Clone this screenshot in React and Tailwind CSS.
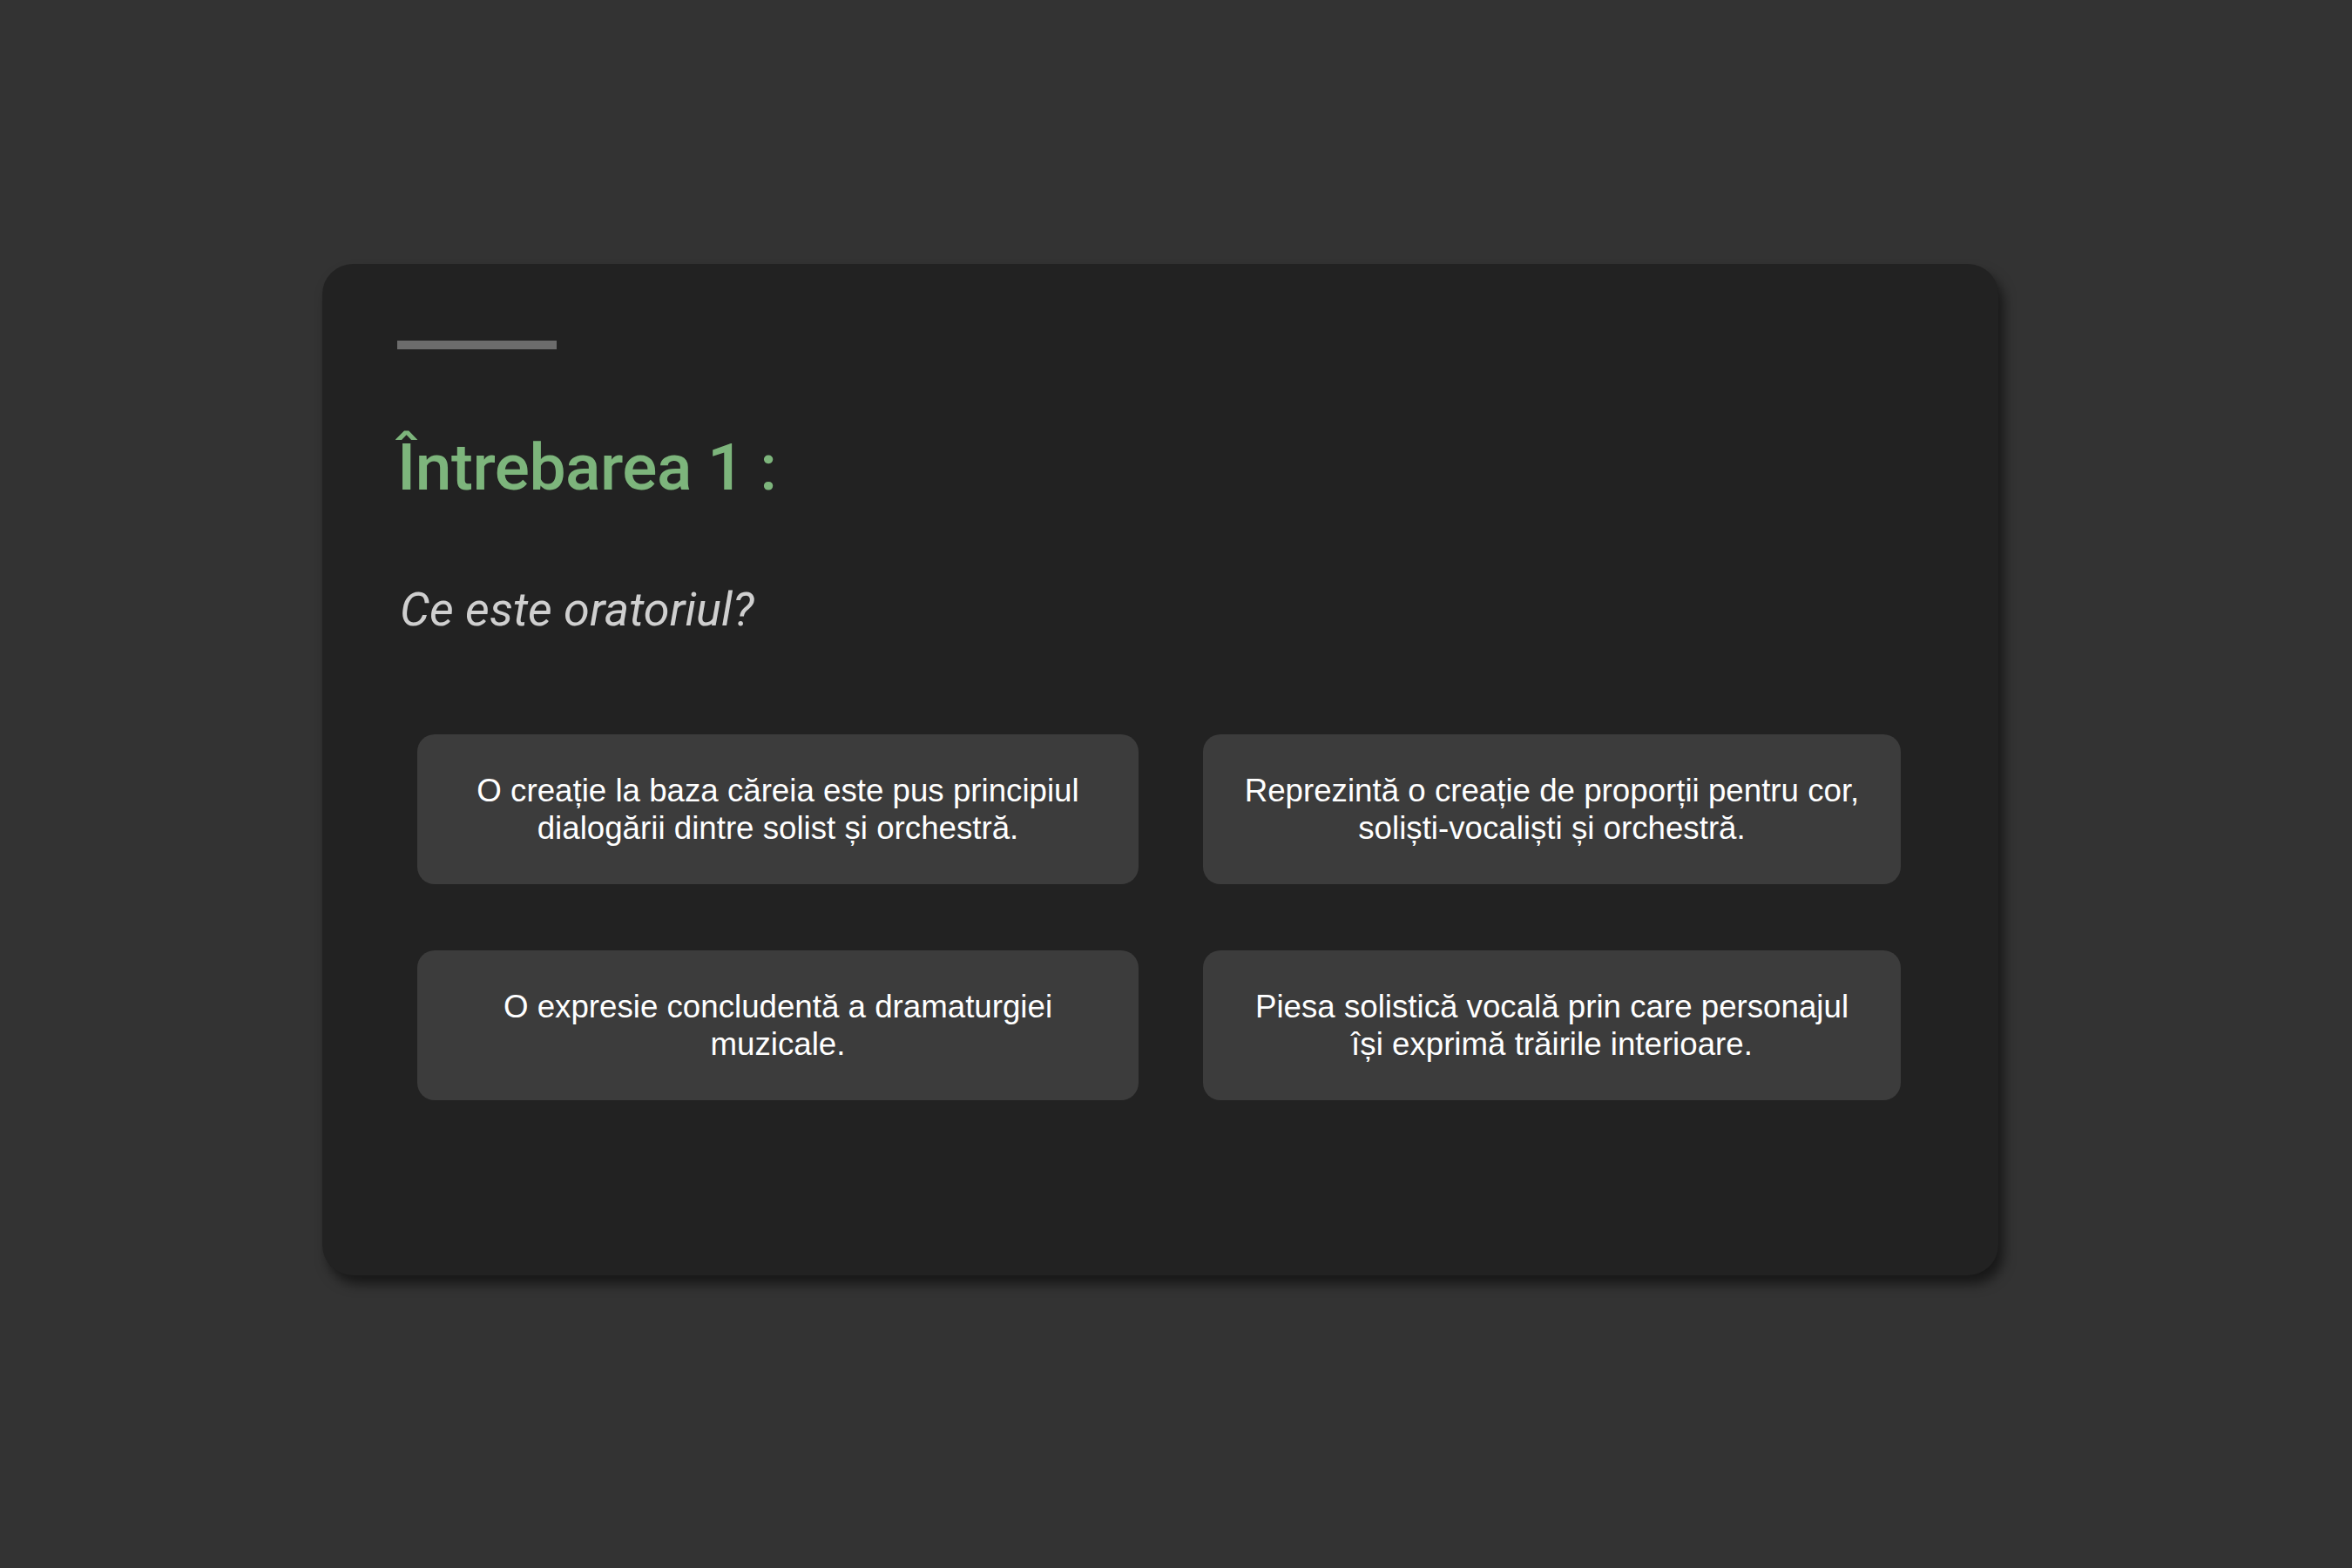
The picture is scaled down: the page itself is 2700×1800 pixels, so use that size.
import React from "react";

const options = [
  "O creație la baza căreia este pus principiul dialogării dintre solist și orchestră.",
  "Reprezintă o creație de proporții pentru cor, soliști-vocaliști și orchestră.",
  "O expresie concludentă a dramaturgiei muzicale.",
  "Piesa solistică vocală prin care personajul își exprimă trăirile interioare.",
];

export default function App() {
  return (
    <div className="w-full h-[1800px] bg-[#333333] pt-[303px] pl-[370px] overflow-hidden">
      <div className="w-[1924px] h-[1161px] rounded-[35px] bg-[#222222] shadow-[6px_10px_14px_rgba(0,0,0,0.55)] pt-[88px] pl-[86px]">
        <div className="w-[183px] h-[10px] bg-[#6c6c6c]" />
        <h1
          className="mt-[91px] text-[75px] leading-[89px] font-medium text-[#7db57c] tracking-[-0.5px]"
          style={{ fontFamily: "Roboto, 'Noto Sans', sans-serif" }}
        >
          Întrebarea 1 :
        </h1>
        <p
          className="mt-[88px] text-[54px] leading-[62px] italic text-[#cfcfcf] pl-[3px]"
          style={{ fontFamily: "Roboto, 'Noto Sans', sans-serif" }}
        >
          Ce este oratoriul?
        </p>
        <div className="mt-[112px] ml-[23px] grid grid-cols-[828px_801px] gap-x-[74px] gap-y-[76px]">
          {options.map((o, i) => (
            <div
              key={i}
              className="h-[172px] rounded-[20px] bg-[#3c3c3c] flex items-center justify-center px-[42px] text-center text-white text-[36.7px] leading-[43px]"
              style={{ fontFamily: "'Liberation Sans', Arial, sans-serif" }}
            >
              {o}
            </div>
          ))}
        </div>
      </div>
    </div>
  );
}
